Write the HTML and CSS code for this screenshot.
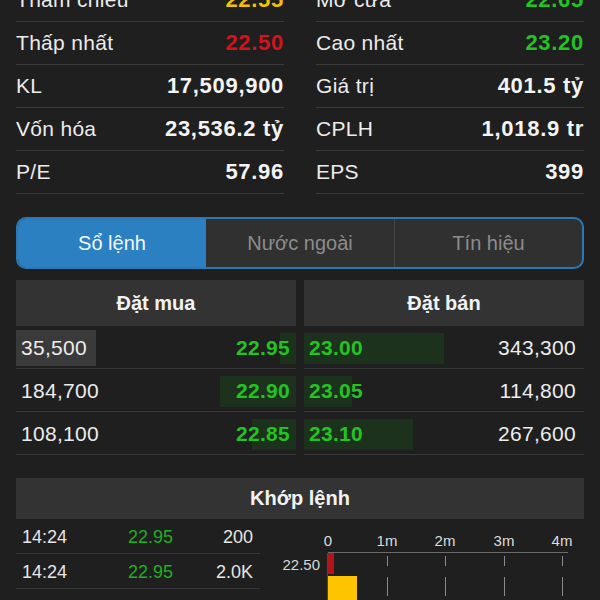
FILE: index.html
```html
<!DOCTYPE html>
<html lang="vi">
<head>
<meta charset="utf-8">
<title>Sổ lệnh</title>
<link rel="stylesheet" href="styles.css">
</head>
<body>
<div class="page">
  <div class="stats">
    <div class="col">
      <div class="stat"><span class="lbl">Tham chiếu</span><span class="val yellow">22.55</span></div>
      <div class="stat"><span class="lbl">Thấp nhất</span><span class="val red">22.50</span></div>
      <div class="stat"><span class="lbl">KL</span><span class="val">17,509,900</span></div>
      <div class="stat"><span class="lbl">Vốn hóa</span><span class="val">23,536.2 tỷ</span></div>
      <div class="stat"><span class="lbl">P/E</span><span class="val">57.96</span></div>
    </div>
    <div class="col">
      <div class="stat"><span class="lbl">Mở cửa</span><span class="val green">22.65</span></div>
      <div class="stat"><span class="lbl">Cao nhất</span><span class="val green">23.20</span></div>
      <div class="stat"><span class="lbl">Giá trị</span><span class="val">401.5 tỷ</span></div>
      <div class="stat"><span class="lbl">CPLH</span><span class="val">1,018.9 tr</span></div>
      <div class="stat"><span class="lbl">EPS</span><span class="val">399</span></div>
    </div>
  </div>

  <div class="tabs">
    <div class="tab active">Sổ lệnh</div>
    <div class="tab">Nước ngoài</div>
    <div class="tab">Tín hiệu</div>
  </div>

  <div class="book">
    <div class="side buy">
      <div class="head">Đặt mua</div>
      <div class="orow"><span class="bar" style="width:16px"></span><span class="qty hl">35,500</span><span class="price">22.95</span></div>
      <div class="orow"><span class="bar" style="width:76px"></span><span class="qty">184,700</span><span class="price">22.90</span></div>
      <div class="orow"><span class="bar" style="width:44px"></span><span class="qty">108,100</span><span class="price">22.85</span></div>
    </div>
    <div class="side sell">
      <div class="head">Đặt bán</div>
      <div class="orow"><span class="bar" style="width:140px"></span><span class="price">23.00</span><span class="qty">343,300</span></div>
      <div class="orow"><span class="bar" style="width:48px"></span><span class="price">23.05</span><span class="qty">114,800</span></div>
      <div class="orow"><span class="bar" style="width:109px"></span><span class="price">23.10</span><span class="qty">267,600</span></div>
    </div>
  </div>

  <div class="match">
    <div class="head">Khớp lệnh</div>
    <div class="match-body">
      <div class="trades">
        <div class="trow"><span class="t">14:24</span><span class="p">22.95</span><span class="v">200</span></div>
        <div class="trow"><span class="t">14:24</span><span class="p">22.95</span><span class="v">2.0K</span></div>
      </div>
      <svg class="chart" width="324" height="90" viewBox="0 0 324 90">
        <g font-family="Liberation Sans, Arial, sans-serif" font-size="15" fill="#dcdcdc" text-anchor="middle">
          <text x="68" y="27">0</text>
          <text x="127" y="27">1m</text>
          <text x="185" y="27">2m</text>
          <text x="244" y="27">3m</text>
          <text x="302" y="27">4m</text>
        </g>
        <line x1="68" y1="33.5" x2="308" y2="33.5" stroke="#6a6a6a" stroke-width="1"/>
        <g stroke="#8a8a8a" stroke-width="1">
          <line x1="127.5" y1="37" x2="127.5" y2="47"/>
          <line x1="185.5" y1="37" x2="185.5" y2="47"/>
          <line x1="244.5" y1="37" x2="244.5" y2="47"/>
          <line x1="302.5" y1="37" x2="302.5" y2="47"/>
          <line x1="127.5" y1="58" x2="127.5" y2="77"/>
          <line x1="185.5" y1="58" x2="185.5" y2="77"/>
          <line x1="244.5" y1="58" x2="244.5" y2="77"/>
          <line x1="302.5" y1="58" x2="302.5" y2="77"/>
        </g>
        <text x="60" y="51" font-family="Liberation Sans, Arial, sans-serif" font-size="15" fill="#d8d8d8" text-anchor="end">22.50</text>
        <line x1="67.5" y1="34" x2="67.5" y2="90" stroke="#3d4a5a" stroke-width="1"/>
        <rect x="68" y="34" width="6" height="21" fill="#b3141a"/>
        <rect x="68" y="57" width="29" height="33" fill="#ffc400"/>
      </svg>
    </div>
  </div>
</div>
</body>
</html>
```

FILE: styles.css
```css
* { box-sizing: border-box; }

html, body {
  margin: 0;
  padding: 0;
  background: #1f1f1f;
  color: #f0f0f0;
  font-family: "Liberation Sans", Arial, sans-serif;
  overflow: hidden;
}

.page {
  padding: 0 16px;
  width: 600px;
}

/* stats */
.stats {
  display: grid;
  grid-template-columns: 1fr 1fr;
  column-gap: 32px;
  margin-top: -21px;
}

.stat {
  height: 43px;
  display: flex;
  align-items: center;
  justify-content: space-between;
  border-bottom: 1px solid #3a3a3a;
  font-size: 21px;
}

.lbl {
  color: #ececec;
  letter-spacing: 0.3px;
}

.val {
  font-weight: bold;
  font-size: 22px;
  color: #f4f4f4;
  letter-spacing: 0.7px;
}

.yellow { color: #f2c200; }
.red { color: #d0141a; }
.green { color: #22c322; }

/* tabs */
.tabs {
  margin-top: 23px;
  height: 52px;
  display: grid;
  grid-template-columns: 1fr 1fr 1fr;
  border: 2px solid #2c78b6;
  border-radius: 10px;
  overflow: hidden;
  background: #303030;
}

.tab {
  display: flex;
  align-items: center;
  justify-content: center;
  font-size: 20px;
  color: #8c8c8c;
  border-left: 1px solid #454545;
}

.tab.active {
  background: #2b80c2;
  color: #f4f8fc;
  border-left: none;
}

.tab.active + .tab { border-left: none; }

/* order book */
.book {
  margin-top: 11px;
  display: grid;
  grid-template-columns: 1fr 1fr;
  column-gap: 8px;
}

.head {
  height: 46px;
  background: #333333;
  display: flex;
  align-items: center;
  justify-content: center;
  font-size: 20px;
  font-weight: bold;
  color: #f2f2f2;
}

.orow {
  position: relative;
  height: 43px;
  display: flex;
  align-items: center;
  justify-content: space-between;
  border-bottom: 1px solid #383838;
  font-size: 21px;
  padding: 2px 6px 0 5px;
}

.sell .orow { padding: 2px 8px 0 5px; }

.bar {
  position: absolute;
  top: 7px;
  bottom: 4px;
  background: #1d321d;
}

.buy .bar { right: 0; }
.sell .bar { left: 0; }

.qty, .price {
  position: relative;
  letter-spacing: 0.3px;
}

.qty { color: #ececec; }

.qty.hl {
  background: #3a3a3a;
  margin-left: -5px;
  padding: 6px 5px 6px 5px;
  width: 80px;
}

.price {
  color: #22c322;
  font-weight: bold;
}

/* match */
.match { margin-top: 23px; }

.match .head {
  height: 41px;
}

.match-body {
  display: flex;
}

.trades {
  width: 244px;
  flex: none;
}

.trow {
  height: 35px;
  display: flex;
  align-items: center;
  border-bottom: 1px solid #353535;
  font-size: 18px;
  padding: 2px 7px 0 6px;
}

.trow .t { width: 106px; color: #e6e6e6; }
.trow .p { color: #20b020; }
.trow .v { margin-left: auto; color: #e6e6e6; }

.chart {
  display: block;
  flex: none;
}
```
